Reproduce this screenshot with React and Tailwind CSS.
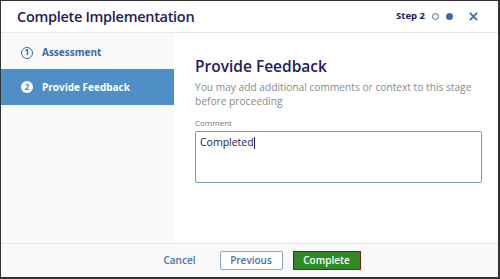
import React from 'react';

const steps = [
  { n: 1, label: 'Assessment' },
  { n: 2, label: 'Provide Feedback' },
];

const App = () => {
  const current = 2;

  return (
    <div
      className="w-[500px] h-[279px] bg-white border-l border-t border-r-2 border-b-2 border-[#333333] flex flex-col overflow-hidden"
      style={{ fontFamily: '"Open Sans", "Liberation Sans", sans-serif' }}
    >
      {/* header */}
      <div className="h-[32px] shrink-0 flex items-center justify-between pl-[16px] pr-[20px] border-b border-[#e6e9ee]">
        <h1 className="text-[14.5px] font-semibold text-[#22205a] tracking-[-0.3px]">Complete Implementation</h1>
        <div className="flex items-center">
          <span className="text-[9.5px] font-bold text-[#22205a]">Step 2</span>
          <span className="ml-[7px] w-[7px] h-[7px] rounded-full border border-[#3e6aa5]" />
          <span className="ml-[7px] w-[7px] h-[7px] rounded-full bg-[#3e6aa5]" />
          <svg className="ml-[16px]" width="9" height="9" viewBox="0 0 10 10">
            <path d="M1 1L9 9M9 1L1 9" stroke="#3e6aa5" strokeWidth="1.9" />
          </svg>
        </div>
      </div>

      <div className="flex flex-1 min-h-0">
        {/* sidebar */}
        <div className="w-[173px] shrink-0 bg-[#f9f9f9] pt-[1px]">
          {steps.map((s) => {
            const active = s.n === current;
            return (
              <div
                key={s.n}
                className={
                  active
                    ? 'h-[36px] flex items-center pl-[20px] bg-[#4f8fc6] text-white'
                    : 'h-[35px] flex items-center pl-[20px] pt-[2px] text-[#3d6ba3]'
                }
              >
                {active ? (
                  <span className="w-[12px] h-[12px] rounded-full bg-white text-[#4f8fc6] text-[8.5px] font-bold flex items-center justify-center leading-none">
                    {s.n}
                  </span>
                ) : (
                  <span className="w-[12px] h-[12px] rounded-full border border-[#3d6ba3] text-[8.5px] font-bold flex items-center justify-center leading-none">
                    {s.n}
                  </span>
                )}
                <span className="ml-[9px] text-[10px] font-bold">{s.label}</span>
              </div>
            );
          })}
        </div>

        {/* content */}
        <div className="flex-1 pl-[21px] pr-[16px] pt-[24px]">
          <h2 className="text-[15.5px] font-semibold text-[#22205a] leading-[18px]">Provide Feedback</h2>
          <p className="mt-[5px] text-[10.2px] text-[#8a8a8a] leading-[14px]">
            You may add additional comments or context to this stage before proceeding
          </p>
          <label className="block mt-[9px] text-[8px] text-[#777777] leading-[12px]">Comment</label>
          <div className="mt-[2px] h-[52px] border border-[#6a9fd0] rounded-[2px] px-[4px] pt-[2px] text-[10.5px] text-[#22205a] leading-[16px]">
            Completed<span className="inline-block w-[1px] h-[12px] bg-[#22205a] align-middle" />
          </div>
        </div>
      </div>

      {/* footer */}
      <div className="h-[34px] shrink-0 bg-[#f9f9f9] border-t border-[#e6e9ee] flex items-center justify-center pl-[25px]">
        <button className="text-[10px] font-semibold text-[#4a72ab]">Cancel</button>
        <button className="ml-[24px] h-[19px] w-[63px] border border-[#8aa6c8] rounded-[2px] bg-white text-[10px] font-semibold text-[#4a72ab]">
          Previous
        </button>
        <button className="ml-[10px] h-[19px] w-[68px] border border-[#8b1a1a] bg-[#2f8a25] text-[10px] font-semibold text-white">
          Complete
        </button>
      </div>
    </div>
  );
};

export default App;
